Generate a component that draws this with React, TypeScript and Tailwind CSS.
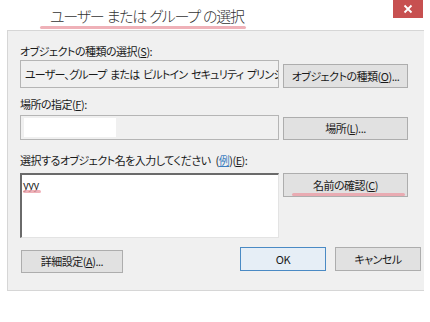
const jp = "font-['Noto_Sans_CJK_JP',sans-serif] [font-feature-settings:'palt'] [word-spacing:3px]";

function Key({ k }: { k: string }) {
  return (
    <>
      (<span className="underline underline-offset-1">{k}</span>)
    </>
  );
}

function Squiggle({ className }: { className: string }) {
  return <span className={"absolute h-[3px] rounded-full bg-[#eb9ea6] opacity-80 " + className} />;
}

function Btn({ children, className }: { children: React.ReactNode; className: string }) {
  return (
    <div
      className={
        "relative flex items-center justify-center whitespace-nowrap border border-[#adadad] bg-[#e1e1e1] text-[11px] tracking-[-0.5px] text-[#1a1a1a] " +
        className
      }
    >
      {children}
    </div>
  );
}

function App() {
  return (
    <div className={"w-[430px] h-[322px] bg-white overflow-hidden " + jp}>
      {/* Title bar */}
      <div className="flex items-start h-[30px]">
        <div className="relative ml-[50px] mt-[6px] text-[15px] leading-[20px] tracking-[-1.2px] [word-spacing:1px] text-[#333] font-light">
          ユーザー または グループ の選択
          <Squiggle className="left-[-10px] right-[-2px] top-[20px]" />
        </div>
        <div className="ml-auto mr-[7px] w-[30px] h-[18px] bg-[#c75050] flex items-center justify-center">
          <svg width="10" height="10" viewBox="0 0 10 10">
            <path d="M1.5 1.5 L8.5 8.5 M8.5 1.5 L1.5 8.5" stroke="#fff" strokeWidth="1.8" />
          </svg>
        </div>
      </div>

      {/* Body */}
      <div className="ml-[7px] w-[417px] h-[261px] bg-[#f0f0f0] border-l border-t border-b border-[#d6d6d6] flex flex-col pl-[12px] pr-[3px] text-[11px] tracking-[-0.5px] text-[#1a1a1a]">
        <div className="mt-[12px] h-[16px] leading-[16px]">
          オブジェクトの種類の選択<Key k="S" />:
        </div>
        <div className="mt-[1px] flex items-end gap-[4px]">
          <div className="w-[259px] h-[28px] border border-[#b5b5b5] bg-[#f0f0f0] pl-[4px] flex items-center overflow-hidden whitespace-nowrap tracking-[-0.8px] [word-spacing:2px]">
            ユーザー、グループ または ビルトイン セキュリティ プリンシパル
          </div>
          <Btn className="w-[125px] h-[24px]">
            オブジェクトの種類<Key k="O" />...
          </Btn>
        </div>

        <div className="mt-[8px] h-[16px] leading-[16px]">
          場所の指定<Key k="F" />:
        </div>
        <div className="mt-[3px] flex items-end gap-[4px]">
          <div className="w-[259px] h-[25px] border border-[#b5b5b5] bg-[#f0f0f0] pl-[3px] flex items-center">
            <div className="w-[92px] h-[19px] bg-white" />
          </div>
          <Btn className="w-[125px] h-[23px]">
            場所<Key k="L" />...
          </Btn>
        </div>

        <div className="mt-[12px] h-[16px] leading-[16px]">
          選択するオブジェクト名を入力してください (
          <span className="text-[#3d7fc1] underline underline-offset-1">例</span>)<Key k="E" />:
        </div>
        <div className="mt-[5px] flex items-start gap-[4px]">
          <div className="w-[259px] h-[65px] bg-white border-t-2 border-l-2 border-t-[#6a6a6a] border-l-[#6a6a6a] border-r border-b border-r-[#e3e3e3] border-b-[#e3e3e3] pl-[1px] pt-[1px]">
            <span className="relative leading-[14px] text-[11px]">
              yyy
              <Squiggle className="left-0 w-[18px] top-[14px]" />
            </span>
          </div>
          <Btn className="w-[125px] h-[24px]">
            名前の確認<Key k="C" />
            <Squiggle className="left-[8px] right-[2px] top-[19px]" />
          </Btn>
        </div>

        <div className="mt-[9px] flex items-start">
          <Btn className="ml-[1px] mt-[3px] w-[102px] h-[23px]">
            詳細設定<Key k="A" />...
          </Btn>
          <Btn className="ml-auto w-[86px] h-[24px] !border-[#4a8ac4] !bg-[#e6eef6]">OK</Btn>
          <Btn className="ml-[9px] w-[86px] h-[24px]">キャンセル</Btn>
        </div>
      </div>
    </div>
  );
}

export default App;
